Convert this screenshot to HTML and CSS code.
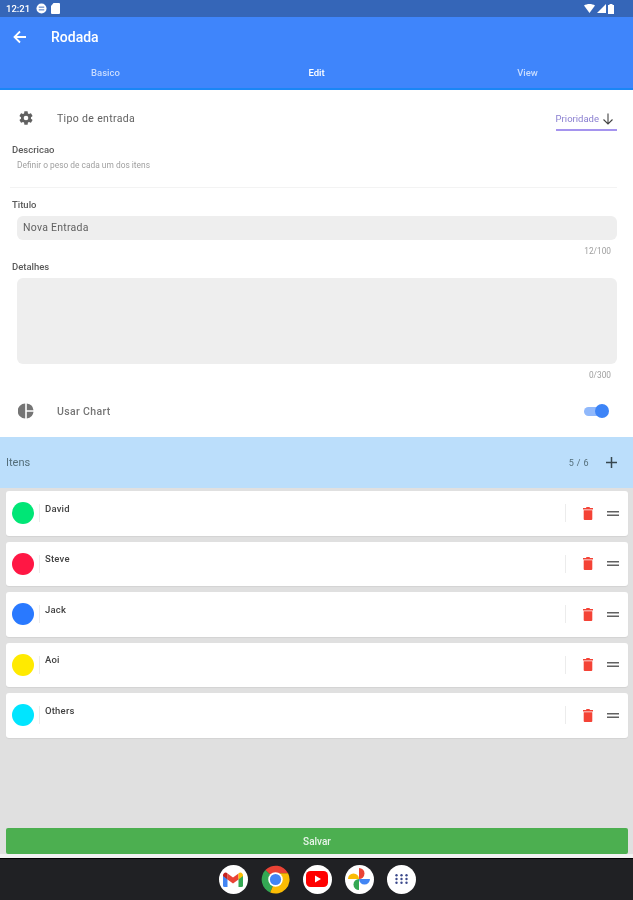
FILE: index.html
```html
<!DOCTYPE html>
<html lang="pt">
<head>
<meta charset="utf-8">
<title>Rodada</title>
<link rel="stylesheet" href="styles.css">
</head>
<body>
<div class="screen">
  <div class="statusbar">
    <div class="status-left">
      <span class="clock">12:21</span>
      <svg class="st-icon" width="11" height="11" viewBox="0 0 12 12"><circle cx="6" cy="6" r="5.5" fill="#fff"/><rect x="3" y="4" width="6" height="1" fill="#3566b8"/><rect x="3" y="7" width="6" height="1" fill="#3566b8"/></svg>
      <svg class="st-icon" width="9" height="11" viewBox="0 0 9 11"><path d="M2.5 0H8a1 1 0 0 1 1 1v9a1 1 0 0 1-1 1H1a1 1 0 0 1-1-1V3z" fill="#fff"/></svg>
    </div>
    <div class="status-right">
      <svg width="11" height="9" viewBox="0 0 11 9"><path d="M0 1.500C3-.5 8-.5 11 1.500L5.500 9z" fill="#fff"/></svg>
      <svg width="9" height="9" viewBox="0 0 9 9"><path d="M9 0v9H0z" fill="#fff"/></svg>
      <svg width="6" height="10" viewBox="0 0 6 10"><path d="M1.500 0h3v1H6v9H0V1h1.500z" fill="#fff"/></svg>
    </div>
  </div>

  <header class="appbar">
    <div class="appbar-top">
      <svg class="back" width="14" height="14" viewBox="0 0 14 14"><path d="M13 7H2M7 1.500 1.500 7 7 12.500" fill="none" stroke="#fff" stroke-width="1.800"/></svg>
      <h1 class="title">Rodada</h1>
    </div>
    <nav class="tabs">
      <span class="tab">Basico</span>
      <span class="tab tab-active">Edit</span>
      <span class="tab">View</span>
    </nav>
  </header>

  <section class="form">
    <div class="type-row">
      <svg class="row-icon" width="16" height="16" viewBox="0 0 24 24"><path fill="#616161" d="M19.430 12.980c.04-.32.070-.64.070-.98s-.03-.66-.07-.98l2.110-1.650c.19-.15.240-.42.120-.64l-2-3.460c-.12-.22-.39-.3-.61-.22l-2.490 1c-.52-.4-1.080-.73-1.690-.98l-.38-2.650A.49.49 0 0 0 14 2h-4c-.25 0-.46.18-.49.420l-.38 2.650c-.61.25-1.170.59-1.690.98l-2.490-1c-.23-.09-.49 0-.61.220l-2 3.460c-.13.22-.07.49.12.64l2.110 1.650c-.04.32-.07.65-.07.98s.03.66.07.98l-2.110 1.650c-.19.15-.24.42-.12.64l2 3.460c.12.22.39.3.61.22l2.490-1c.52.4 1.080.73 1.690.98l.38 2.650c.03.24.24.42.49.42h4c.25 0 .46-.18.49-.42l.38-2.650c.61-.25 1.170-.59 1.690-.98l2.490 1c.23.09.49 0 .61-.22l2-3.460c.12-.22.07-.49-.12-.64zM12 15.500a3.500 3.500 0 1 1 0-7 3.500 3.500 0 0 1 0 7z"/></svg>
      <span class="row-label">Tipo de entrada</span>
      <div class="dropdown">
        <span class="dropdown-text">Prioridade</span>
        <svg width="12" height="12" viewBox="0 0 12 12"><path d="M6 .500V11M1.500 6.500 6 11l4.500-4.500" fill="none" stroke="#444" stroke-width="1.100"/></svg>
      </div>
    </div>
    <div class="desc">
      <div class="field-label">Descricao</div>
      <div class="desc-hint">Definir o peso de cada um dos itens</div>
    </div>
    <div class="divider"></div>
    <div class="field-label field-titulo">Titulo</div>
    <div class="input input-single">Nova Entrada</div>
    <div class="counter counter-a">12/100</div>
    <div class="field-label field-detalhes">Detalhes</div>
    <div class="input input-multi"></div>
    <div class="counter counter-b">0/300</div>
    <div class="chart-row">
      <svg class="row-icon" width="16" height="16" viewBox="0 0 16 16"><path fill="#757575" d="M7.200.500v15A7.500 7.500 0 0 1 7.200.500zM8.800.500a7.500 7.500 0 0 1 6.700 6.700H8.800zM8.800 8.800h6.700a7.500 7.500 0 0 1-6.700 6.700z"/></svg>
      <span class="row-label row-label-bold">Usar Chart</span>
      <span class="switch"><span class="switch-thumb"></span></span>
    </div>
  </section>

  <section class="items">
    <div class="items-head">
      <span class="items-title">Itens</span>
      <span class="items-count">5 / 6</span>
      <svg class="plus" width="11" height="11" viewBox="0 0 11 11"><path d="M5.500 0v11M0 5.500h11" stroke="#37474f" stroke-width="1.500"/></svg>
    </div>
    <div class="item-list">
      <article class="card">
        <span class="dot dot-green"></span><span class="sep"></span><span class="name">David</span>
        <span class="sep sep-right"></span>
        <svg class="trash" width="10" height="13" viewBox="0 0 10 13"><path fill="#f44336" d="M3.500 0h3l.5 1h3v1.500H0V1h3zM.7 3.300h8.600V12a1 1 0 0 1-1 1H1.700a1 1 0 0 1-1-1z"/></svg>
        <svg class="drag" width="12" height="5" viewBox="0 0 12 5"><path d="M0 .800h12M0 4.200h12" stroke="#616161" stroke-width="1.500"/></svg>
      </article>
      <article class="card">
        <span class="dot dot-red"></span><span class="sep"></span><span class="name">Steve</span>
        <span class="sep sep-right"></span>
        <svg class="trash" width="10" height="13" viewBox="0 0 10 13"><path fill="#f44336" d="M3.500 0h3l.5 1h3v1.500H0V1h3zM.7 3.300h8.600V12a1 1 0 0 1-1 1H1.700a1 1 0 0 1-1-1z"/></svg>
        <svg class="drag" width="12" height="5" viewBox="0 0 12 5"><path d="M0 .800h12M0 4.200h12" stroke="#616161" stroke-width="1.500"/></svg>
      </article>
      <article class="card">
        <span class="dot dot-blue"></span><span class="sep"></span><span class="name">Jack</span>
        <span class="sep sep-right"></span>
        <svg class="trash" width="10" height="13" viewBox="0 0 10 13"><path fill="#f44336" d="M3.500 0h3l.5 1h3v1.500H0V1h3zM.7 3.300h8.600V12a1 1 0 0 1-1 1H1.700a1 1 0 0 1-1-1z"/></svg>
        <svg class="drag" width="12" height="5" viewBox="0 0 12 5"><path d="M0 .800h12M0 4.200h12" stroke="#616161" stroke-width="1.500"/></svg>
      </article>
      <article class="card">
        <span class="dot dot-yellow"></span><span class="sep"></span><span class="name">Aoi</span>
        <span class="sep sep-right"></span>
        <svg class="trash" width="10" height="13" viewBox="0 0 10 13"><path fill="#f44336" d="M3.500 0h3l.5 1h3v1.500H0V1h3zM.7 3.300h8.600V12a1 1 0 0 1-1 1H1.700a1 1 0 0 1-1-1z"/></svg>
        <svg class="drag" width="12" height="5" viewBox="0 0 12 5"><path d="M0 .800h12M0 4.200h12" stroke="#616161" stroke-width="1.500"/></svg>
      </article>
      <article class="card">
        <span class="dot dot-cyan"></span><span class="sep"></span><span class="name">Others</span>
        <span class="sep sep-right"></span>
        <svg class="trash" width="10" height="13" viewBox="0 0 10 13"><path fill="#f44336" d="M3.500 0h3l.5 1h3v1.500H0V1h3zM.7 3.300h8.600V12a1 1 0 0 1-1 1H1.700a1 1 0 0 1-1-1z"/></svg>
        <svg class="drag" width="12" height="5" viewBox="0 0 12 5"><path d="M0 .800h12M0 4.200h12" stroke="#616161" stroke-width="1.500"/></svg>
      </article>
    </div>
    <button class="save">Salvar</button>
  </section>

  <footer class="dock">
    <span class="dock-app">
      <svg width="20" height="15" viewBox="0 0 20 15">
        <path d="M0 3v10.500A1.500 1.500 0 0 0 1.500 15H4.500V6.500z" fill="#4285f4"/>
        <path d="M20 3v10.500a1.500 1.500 0 0 1-1.500 1.500H15.500V6.500z" fill="#34a853"/>
        <path d="M4.500 7.500V1.500L10 5.500l5.500-4v6L10 11.500z" fill="#ea4335"/>
        <path d="M0 3.500C0 .8 2.800-.8 4.500 1.500v6L0 4z" fill="#c5221f"/>
        <path d="M20 3.500C20 .8 17.200-.8 15.500 1.500v6L20 4z" fill="#fbbc04"/>
      </svg>
    </span>
    <span class="dock-app dock-chrome">
      <svg width="29" height="29" viewBox="0 0 30 30">
        <path d="M15 15 4.500 5.300A14.500 14.500 0 0 1 28 8.500H15z" fill="#ea4335"/>
        <path d="M15 15 9.500 28.400A14.500 14.500 0 0 1 4.500 5.300z" fill="#34a853"/>
        <path d="M15 15V8.500h13a14.500 14.500 0 0 1-18.500 19.900z" fill="#fbbc04"/>
        <circle cx="15" cy="15" r="7.500" fill="#fff"/>
        <circle cx="15" cy="15" r="5.800" fill="#4285f4"/>
      </svg>
    </span>
    <span class="dock-app">
      <svg width="22" height="16" viewBox="0 0 22 16"><rect width="22" height="16" rx="4.500" fill="#f00"/><path d="M9 4.500v7l6-3.500z" fill="#fff"/></svg>
    </span>
    <span class="dock-app">
      <svg width="22" height="22" viewBox="0 0 22 22">
        <path d="M11 11H0a5.500 5.500 0 0 1 11 0z" fill="#fbbc04"/>
        <path d="M11 11V0a5.500 5.500 0 0 1 0 11z" fill="#ea4335"/>
        <path d="M11 11h11a5.500 5.500 0 0 1-11 0z" fill="#4285f4"/>
        <path d="M11 11v11a5.500 5.500 0 0 1 0-11z" fill="#34a853"/>
      </svg>
    </span>
    <span class="dock-app">
      <svg width="13" height="10" viewBox="0 0 13 10" fill="#3c4a8c">
        <circle cx="1.500" cy="1.300" r="1.200"/><circle cx="6.500" cy="1.300" r="1.200"/><circle cx="11.500" cy="1.300" r="1.200"/>
        <circle cx="1.500" cy="5" r="1.200"/><circle cx="6.500" cy="5" r="1.200"/><circle cx="11.500" cy="5" r="1.200"/>
        <circle cx="1.500" cy="8.700" r="1.200"/><circle cx="6.500" cy="8.700" r="1.200"/><circle cx="11.500" cy="8.700" r="1.200"/>
      </svg>
    </span>
  </footer>
</div>
</body>
</html>
```
FILE: styles.css
```css
* { box-sizing: border-box; }
html, body { margin: 0; padding: 0; background: #fff; }
body { font-family: Roboto, "Noto Sans", "Liberation Sans", sans-serif; }
.screen { width: 633px; height: 900px; display: flex; flex-direction: column; overflow: hidden; filter: blur(0.6px); }

.statusbar { height: 17px; flex: none; background: #3566b8; display: flex; justify-content: space-between; align-items: center; padding: 0 19px 0 6px; color: #fff; }
.status-left { display: flex; align-items: center; gap: 4px; }
.status-right { display: flex; align-items: center; gap: 2px; }
.clock { font-size: 9.500px; font-weight: 500; margin-right: 2px; }

.appbar { height: 73px; flex: none; background: #3f85fb; border-bottom: 2px solid #1a86f5; display: flex; flex-direction: column; }
.appbar-top { height: 40px; display: flex; align-items: center; padding-left: 13px; }
.back { flex: none; }
.title { margin: 0 0 0 24px; font-size: 14px; font-weight: 500; color: #fff; }
.tabs { display: grid; grid-template-columns: repeat(3, 1fr); height: 31px; align-items: center; }
.tab { text-align: center; font-size: 9.500px; font-weight: 500; color: #c8dcff; }
.tab-active { color: #fff; }

.form { height: 347px; flex: none; background: #fff; display: flex; flex-direction: column; padding: 0 16px 0 12px; }
.type-row { display: flex; align-items: center; height: 40px; margin-top: 8px; }
.row-icon { flex: none; margin-left: 6px; }
.row-label { margin-left: 23px; font-size: 10.500px; color: #616161; flex: 1; letter-spacing: .35px; }
.row-label-bold { font-weight: 500; color: #757575; }
.dropdown { display: flex; align-items: center; gap: 3px; height: 21px; border-bottom: 2px solid #a594ee; margin-top: 4px; padding: 0 3px 1px 0; }
.dropdown-text { font-size: 9.500px; color: #8a7fd0; }

.desc { margin-top: 6px; }
.field-label { font-size: 9.500px; font-weight: 500; color: #5a5a5a; line-height: 11px; }
.desc-hint { font-size: 8.400px; color: #a0a0a0; margin: 5px 0 0 5px; line-height: 11px; }
.divider { height: 1px; background: #f3f3f3; margin: 16px 0 0 -2px; }
.field-titulo { margin-top: 11px; }
.input { background: #eee; border-radius: 6px; margin: 0 0 0 5px; flex: none; }
.input-single { height: 24px; margin-top: 6px; font-size: 10.500px; color: #616161; line-height: 24px; padding-left: 6px; letter-spacing: .25px; }
.input-multi { height: 86px; margin-top: 6px; }
.counter { font-size: 8.300px; color: #9e9e9e; text-align: right; line-height: 10px; padding-right: 6px; }
.counter-a { margin-top: 6px; }
.counter-b { margin-top: 6px; }
.field-detalhes { margin-top: 5px; }

.chart-row { display: flex; align-items: center; height: 22px; margin-top: 20px; }
.switch { width: 23px; height: 9px; background: #90b8fb; border-radius: 5px; position: relative; margin-right: 10px; }
.switch-thumb { position: absolute; right: -2px; top: -2.500px; width: 14px; height: 14px; border-radius: 50%; background: #3d84f7; }

.items { flex: 1; background: #e0e0e0; display: flex; flex-direction: column; }
.items-head { height: 51px; flex: none; background: #bbdefb; display: flex; align-items: center; padding: 0 16px 0 6px; }
.items-title { flex: 1; font-size: 11px; color: #546e7a; }
.items-count { font-size: 9px; color: #546e7a; margin-right: 17px; letter-spacing: .4px; }

.item-list { display: flex; flex-direction: column; gap: 6px; padding: 3px 5px 0 6px; flex: none; }
.card { height: 44.500px; background: #fff; border-radius: 3px; display: flex; align-items: center; padding: 0 9px 0 6px; box-shadow: 0 1px 1px rgba(0,0,0,.06); }
.dot { width: 22px; height: 22px; border-radius: 50%; flex: none; }
.dot-green { background: #00e676; }
.dot-red { background: #ff1744; }
.dot-blue { background: #2979ff; }
.dot-yellow { background: #ffea00; }
.dot-cyan { background: #00e5ff; }
.sep { width: 1px; height: 18px; background: #ececec; flex: none; margin-left: 5px; }
.sep-right { margin-left: 0; }
.name { flex: 1; font-size: 9.500px; font-weight: 500; color: #424242; margin: -10px 0 0 5px; letter-spacing: .2px; }
.trash { margin-left: 17px; flex: none; }
.drag { margin-left: 14px; flex: none; }

.save { margin: auto 5px 0 6px; height: 26px; flex: none; background: #4caf50; color: #e8f5e9; border: 0; border-radius: 2px; font: 500 10px Roboto, sans-serif; }

.dock { height: 46px; flex: none; background: #202124; border-top: 4px solid #f2f2f2; box-shadow: inset 0 1px 0 #000; display: flex; justify-content: center; align-items: center; gap: 13px; padding-left: 1px; }
.dock-app { width: 29px; height: 29px; border-radius: 50%; background: #fff; display: flex; align-items: center; justify-content: center; }
.dock-chrome { background: transparent; }
```
